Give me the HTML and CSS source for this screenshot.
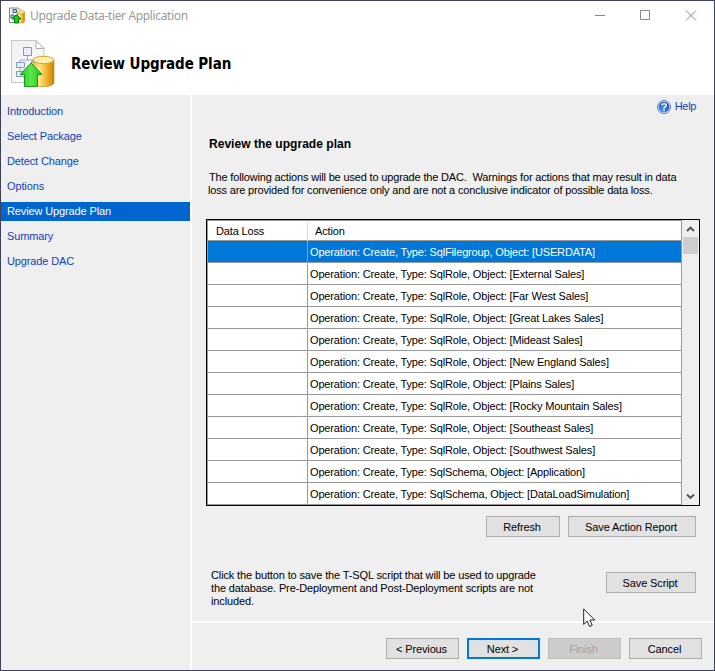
FILE: index.html
```html
<!DOCTYPE html>
<html lang="en">
<head>
<meta charset="utf-8">
<title>Upgrade Data-tier Application</title>
<link rel="stylesheet" href="styles.css">
</head>
<body>
<svg width="0" height="0" class="defs">
  <defs>
    <linearGradient id="gold" x1="0" x2="1"><stop offset="0" stop-color="#f3b73a"/><stop offset=".3" stop-color="#ffe68a"/><stop offset=".65" stop-color="#eeb52e"/><stop offset="1" stop-color="#c98205"/></linearGradient>
    <linearGradient id="green" x1="0" x2="1"><stop offset="0" stop-color="#25c923"/><stop offset=".5" stop-color="#5ae848"/><stop offset="1" stop-color="#22bd20"/></linearGradient>
    <linearGradient id="paper" x1="0" y1="0" x2="1" y2="1"><stop offset="0" stop-color="#f0f0f0"/><stop offset="1" stop-color="#fdfdfd"/></linearGradient>
    <radialGradient id="blue" cx=".4" cy=".7" r=".7"><stop offset="0" stop-color="#4b9bf4"/><stop offset="1" stop-color="#1748b4"/></radialGradient>
  </defs>
</svg>
<div class="window">
  <header class="top">
    <div class="titlebar">
      <svg class="app-icon" width="16" height="17" viewBox="0 0 16 17">
        <path d="M.5 1h9l2.500 3v11.500H.5z" fill="#f5f7f9" stroke="#7c8790"/>
        <path d="M4 2.500h3.500v3H4zM2 8h3v3H2z" fill="#b8cbe4" stroke="#405f8c"/>
        <path d="M8.500 5V14.500c0 2 7 2 7 0V5z" fill="url(#gold)" stroke="#c98912" stroke-width=".6"/>
        <ellipse cx="12" cy="5" rx="3.500" ry="1.500" fill="#ffe9a0" stroke="#d39a24" stroke-width=".6"/>
        <path d="M7.500 7.500l4.500 4.500H9.500v4h-4v-4H3z" fill="#12d018" stroke="#066f10"/>
      </svg>
      <span class="caption">Upgrade Data-tier Application</span>
      <svg class="controls" width="102" height="12" viewBox="0 0 102 12" fill="none" stroke="#888">
        <path d="M0 5.500h10M45.500.500h9v9h-9z"/><path d="M91 .5l10 10M101 .5l-10 10"/>
      </svg>
    </div>
    <div class="banner">
      <svg width="44" height="48" viewBox="0 0 44 48">
        <path d="M.5.5H25l8 8V42.500H.5z" fill="url(#paper)" stroke="#c6c8ca"/>
        <path d="M25 .5v8h8z" fill="#fff" stroke="#a9adb0"/>
        <path d="M16.500 15v5M9 24v-4h16v5M9 28v4" fill="none" stroke="#9aabc0"/>
        <g fill="#e7eefa" stroke="#7d99c4"><path d="M12.500 7.500h8v8h-8zM5.500 22.500h8v5h-8zM5.500 31.500h8v5h-8zM20.500 21.500h5v6h-5z"/></g>
        <path d="M22 20v22.500c0 5.500 21 5.500 21 0V20z" fill="url(#gold)" stroke="#c48a1b" stroke-width=".7"/>
        <ellipse cx="32.500" cy="20" rx="10.500" ry="3.700" fill="#ffeeb0" stroke="#d8a130"/>
        <path d="M20 23l11 11.500h-4.500v12h-13v-12H9z" fill="url(#green)" stroke="#139a1b"/>
      </svg>
      <h1>Review Upgrade Plan</h1>
    </div>
  </header>
  <div class="body">
    <nav class="steps">
      <a>Introduction</a><a>Select Package</a><a>Detect Change</a><a>Options</a><a class="current">Review Upgrade Plan</a><a>Summary</a><a>Upgrade DAC</a>
    </nav>
    <main>
      <div class="page">
        <div class="help">
          <svg width="14" height="14" viewBox="0 0 14 14"><circle cx="7" cy="7" r="6.500" fill="#dbe9fa" stroke="#5a7db8"/><circle cx="7" cy="7" r="5.300" fill="url(#blue)"/><path d="M5 5.500c0-2.500 4.200-2.300 4.200 0C9.200 7 7 6.900 7 8.600M7 9.800v1.400" fill="none" stroke="#fff" stroke-width="1.500"/></svg>
          <span>Help</span>
        </div>
        <h2>Review the upgrade plan</h2>
        <p class="intro"><span class="line first">The following actions will be used to upgrade the DAC.&nbsp; Warnings for actions that may result in data</span><span class="line second">loss are provided for convenience only and are not a conclusive indicator of possible data loss.</span></p>
        <div class="grid">
          <div class="rows">
            <div class="row head"><span>Data Loss</span><span>Action</span></div>
            <div class="row selected"><span></span><span>Operation: Create, Type: SqlFilegroup, Object: [USERDATA]</span></div>
            <div class="row"><span></span><span>Operation: Create, Type: SqlRole, Object: [External Sales]</span></div>
            <div class="row"><span></span><span>Operation: Create, Type: SqlRole, Object: [Far West Sales]</span></div>
            <div class="row"><span></span><span>Operation: Create, Type: SqlRole, Object: [Great Lakes Sales]</span></div>
            <div class="row"><span></span><span>Operation: Create, Type: SqlRole, Object: [Mideast Sales]</span></div>
            <div class="row"><span></span><span>Operation: Create, Type: SqlRole, Object: [New England Sales]</span></div>
            <div class="row"><span></span><span>Operation: Create, Type: SqlRole, Object: [Plains Sales]</span></div>
            <div class="row"><span></span><span>Operation: Create, Type: SqlRole, Object: [Rocky Mountain Sales]</span></div>
            <div class="row"><span></span><span>Operation: Create, Type: SqlRole, Object: [Southeast Sales]</span></div>
            <div class="row"><span></span><span>Operation: Create, Type: SqlRole, Object: [Southwest Sales]</span></div>
            <div class="row"><span></span><span>Operation: Create, Type: SqlSchema, Object: [Application]</span></div>
            <div class="row"><span></span><span>Operation: Create, Type: SqlSchema, Object: [DataLoadSimulation]</span></div>
          </div>
          <div class="scrollbar">
            <svg width="17" height="17" viewBox="0 0 17 17"><path d="M5 11l3.500-3.500L12 11" fill="none" stroke="#505050" stroke-width="1.800"/></svg>
            <div class="thumb"></div>
            <svg width="17" height="17" viewBox="0 0 17 17"><path d="M5 6.500L8.500 10 12 6.500" fill="none" stroke="#505050" stroke-width="1.800"/></svg>
          </div>
        </div>
        <div class="grid-actions"><button class="refresh">Refresh</button><button class="report">Save Action Report</button></div>
        <div class="save">
          <p>Click the button to save the T-SQL script that will be used to upgrade<br>the database. Pre-Deployment and Post-Deployment scripts are not<br>included.</p>
          <button class="script">Save Script</button>
        </div>
      </div>
      <footer><button>&lt; Previous</button><button class="default">Next &gt;</button><button class="off" disabled>Finish</button><button>Cancel</button></footer>
    </main>
  </div>
  <svg class="cursor" width="13" height="20" viewBox="0 0 13 20"><path d="M.7.9v15.500l3.500-3.400 2.400 5.500 2.600-1.200L6.900 12h4.800z" fill="#fff" stroke="#20202c"/></svg>
</div>
</body>
</html>
```
FILE: styles.css
```css
* { box-sizing: border-box; }
body { margin: 0; font: 11px/13px "Liberation Sans", Arial, sans-serif; letter-spacing: -0.13px; color: #000; }
h1, h2, p { margin: 0; }
.defs { position: absolute; }
.window { position: relative; width: 715px; height: 671px; border: 1px solid #3e4258; background: #efefef; display: flex; flex-direction: column; }
.top { height: 94px; background: #fff; }
.titlebar { height: 30px; display: flex; align-items: center; padding: 0 17px 0 8px; }
.app-icon { margin-top: -1px; }
.caption { margin-left: 5px; font: 12px/16px "Noto Sans", sans-serif; letter-spacing: -0.36px; color: #999; }
.controls { margin-left: auto; }
.banner { display: flex; padding: 9px 0 0 10px; }
h1 { margin: 13px 0 0 16px; font: bold 15px/22px "DejaVu Sans Condensed", "DejaVu Sans", sans-serif; letter-spacing: -0.1px; }
.body { flex: 1; display: flex; }
.steps { flex: none; width: 191px; border-right: 2px solid #fff; padding-top: 7px; display: flex; flex-direction: column; gap: 6px; }
.steps a { height: 19px; line-height: 19px; padding-left: 6px; color: #1042bd; }
.steps .current { background: #0066cf; color: #fff; }
main { flex: 1; min-width: 0; display: flex; flex-direction: column; }
.page { height: 526px; padding: 4px 14px 0; }
.help { display: flex; justify-content: flex-end; align-items: center; gap: 4px; height: 15px; margin-right: 4px; letter-spacing: -0.35px; color: #1042bd; }
h2 { margin: 23px 0 0 3px; font-size: 12px; line-height: 15px; letter-spacing: 0.03px; }
.intro { margin: 19px 0 0 2px; letter-spacing: -0.165px; }
.line { display: block; white-space: pre; }
.first { margin-left: 1px; }
.grid { width: 494px; height: 287px; margin-top: 22px; border: 1px solid #000; display: flex; background: #efefef; }
.rows { width: 475px; border: solid #999; border-width: 1px 1px 0; background: #fff; letter-spacing: -0.15px; }
.row { display: grid; grid-template-columns: 100px 1fr; height: 22px; line-height: 22px; border-bottom: 1px solid #999; white-space: nowrap; }
.row span:first-child { border-right: 1px solid #999; }
.row span:last-child { padding-left: 2px; }
.row.head { height: 20px; line-height: 20px; }
.row.head span:first-child { padding-left: 8px; border-color: #ddd; }
.row.head span:last-child { padding-left: 7px; }
.row.selected { background: #0078d9; color: #fff; }
.scrollbar { width: 17px; display: flex; flex-direction: column; }
.thumb { height: 17px; width: 15px; margin: 0 1px auto; background: #cdcdcd; }
.grid-actions { display: flex; justify-content: flex-end; gap: 8px; margin: 10px 4px 0 0; }
button { width: 74px; height: 21px; padding: 1px 2px 0 0; border: 1px solid #adadad; background: #e1e1e1; font: inherit; letter-spacing: inherit; color: #000; white-space: nowrap; }
.report { width: 128px; }
.save { display: flex; justify-content: space-between; margin: 32px 4px 0 5px; }
.save p { white-space: nowrap; }
.script { width: 90px; margin-top: 3px; }
footer { border-top: 2px solid #fff; flex: 1; display: flex; justify-content: flex-end; gap: 8px; padding: 15px 12px 0; }
footer button { width: 73px; }
.default { border: 2px solid #0078d7; }
.off { background: #ccc; border-color: #bfbfbf; color: #a3a3a3; }
.cursor { position: absolute; left: 582px; top: 607px; }
```
